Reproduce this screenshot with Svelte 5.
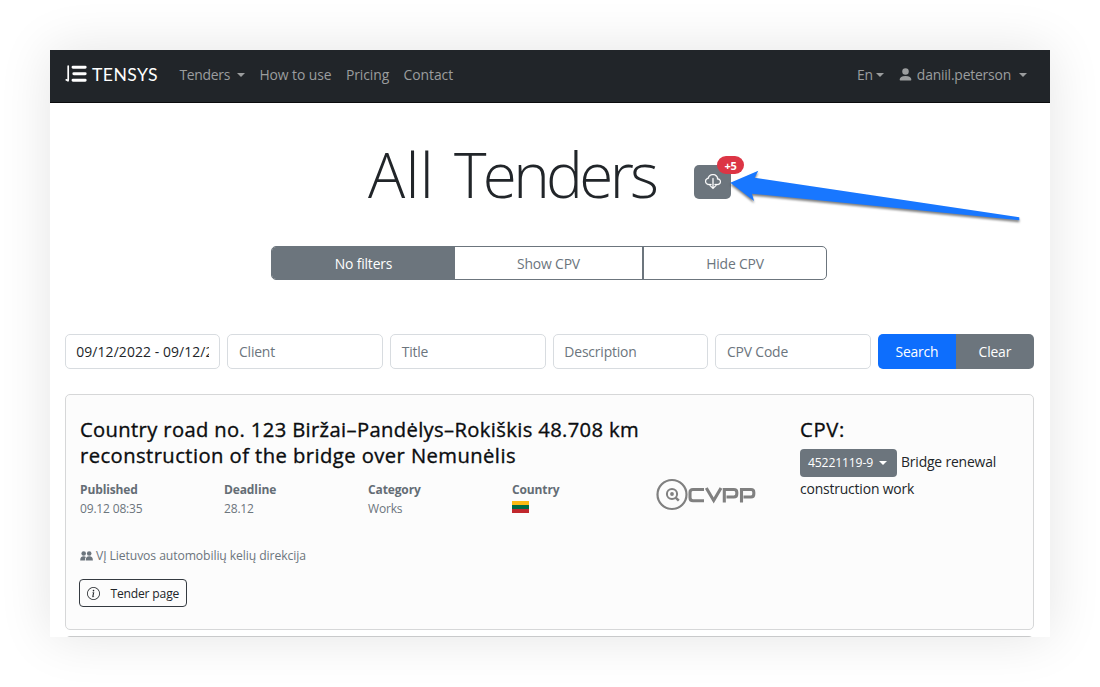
<script>
  const links = [
    { label: 'Tenders', caret: true },
    { label: 'How to use' },
    { label: 'Pricing' },
    { label: 'Contact' }
  ];
  const filters = ['No filters', 'Show CPV', 'Hide CPV'];
  const fields = ['Client', 'Title', 'Description', 'CPV Code'];
  const facts = [
    { name: 'Published', value: '09.12 08:35' },
    { name: 'Deadline', value: '28.12' },
    { name: 'Category', value: 'Works' },
    { name: 'Country', flag: true }
  ];
</script>

<div class="window">
  <nav>
    <div class="brand">
      <svg width="22" height="18" viewBox="0 0 22 18" fill="none" stroke="#fff" stroke-linecap="round">
        <path d="M3.200 1.200v14M1.200 14.800l1.800 1" stroke-width="1.700" />
        <path d="M8 2.300h12.200M8.800 8.700h11.400M8 15.200h12.200" stroke-width="2.900" />
      </svg>
      <span>TENSYS</span>
    </div>
    <div class="links">
      {#each links as l}
        <span class="link" class:drop={l.caret}>{l.label}{#if l.caret}<i class="caret"></i>{/if}</span>
      {/each}
    </div>
    <div class="account">
      <span class="lang">En<i class="caret"></i></span>
      <span class="user">
        <svg width="13" height="13" viewBox="0 0 16 16" fill="#9b9d9e"><path d="M1.600 15.500Q.8 15.500.8 14.500Q.8 9.800 8 9.800T15.200 14.500Q15.200 15.500 14.400 15.500z" /><circle cx="8" cy="4.400" r="4" /></svg>
        <b>daniil.peterson</b><i class="caret"></i>
      </span>
    </div>
  </nav>

  <header>
    <h1><span class="all">All</span> <span class="tenders">Tenders</span></h1>
    <div class="cloud">
      <svg width="16" height="16" viewBox="0 0 16 16" fill="#fff" stroke="#fff" stroke-width=".3">
        <path d="M4.406 1.342A5.530 5.530 0 0 1 8 0c2.690 0 4.923 2 5.166 4.579C14.758 4.804 16 6.137 16 7.773 16 9.569 14.502 11 12.687 11H10a.5.5 0 0 1 0-1h2.688C13.979 10 15 8.988 15 7.773c0-1.216-1.020-2.228-2.313-2.228h-.5v-.5C12.188 2.825 10.328 1 8 1a4.530 4.530 0 0 0-2.941 1.100c-.757.652-1.153 1.438-1.153 2.055v.448l-.445.049C2.064 4.805 1 5.952 1 7.318 1 8.785 2.230 10 3.781 10H6a.5.5 0 0 1 0 1H3.781C1.708 11 0 9.366 0 7.318c0-1.763 1.266-3.223 2.942-3.593.143-.863.698-1.723 1.464-2.383z" />
        <path d="M7.646 15.854a.5.5 0 0 0 .708 0l3-3a.5.5 0 0 0-.708-.708L8.500 14.293V5.500a.5.5 0 0 0-1 0v8.793l-2.146-2.147a.5.5 0 0 0-.708.708l3 3z" transform="translate(0 -1)" />
      </svg>
      <span class="badge">+5</span>
      <svg class="arrow" width="300" height="60" viewBox="0 0 300 60">
        <path d="M6.300 17.700L34.300 5.700 30.700 12.700 295.300 52.300V55.300L28 28.700 30 36z" fill="#1877ff" />
      </svg>
    </div>
  </header>

  <div class="filters">
    {#each filters as f, i}
      <div class="filter" class:active={i === 0}>{f}</div>
    {/each}
  </div>

  <div class="search">
    <div class="field date"><span>09/12/2022 - 09/12/2022</span></div>
    {#each fields as f}
      <div class="field">{f}</div>
    {/each}
    <div class="buttons"><div class="go">Search</div><div class="clear">Clear</div></div>
  </div>

  <article>
    <div class="main">
      <h4>Country road no. 123 Biržai–Pandėlys–Rokiškis 48.708 km<br /><span class="second">reconstruction of the bridge over Nemunėlis</span></h4>
      <div class="facts">
        {#each facts as f}
          <div class="fact">
            <strong>{f.name}</strong>
            {#if f.flag}<i class="flag"></i>{:else}<span>{f.value}</span>{/if}
          </div>
        {/each}
        <svg class="cvpp" width="101" height="34" viewBox="0 0 101 34" fill="none" stroke="#808080">
          <circle cx="16" cy="16.500" r="14.500" stroke-width="2.200" />
          <circle cx="16" cy="16" r="5.100" stroke-width="2" />
          <circle cx="16" cy="16" r="1.900" fill="#808080" stroke="none" />
          <path d="M19.600 19.600l3.200 3" stroke-width="2.600" />
          <path d="M48 11.500H37Q34 11.500 34 14.500V19.500Q34 22.800 37 22.800H48M50.300 10l7.400 12.500L65 10M68.300 24.500V11.500H77.800Q80.800 11.500 80.800 14.300V16Q80.800 19 77.800 19H70.500M85.500 24.500V11.500H95Q97.800 11.500 97.800 14.300V16Q97.800 19 95 19H87.500" stroke-width="3.100" />
        </svg>
      </div>
      <div class="client">
        <svg width="13" height="10" viewBox="0 0 13 10" fill="#6c757d"><circle cx="3.700" cy="2.500" r="2.300" /><circle cx="9.200" cy="2.500" r="2.300" /><path d="M.2 9.400Q.2 5.300 3.700 5.300 5.200 5.300 5.900 6 4.800 7.200 4.900 9.400zM5.700 9.400Q5.700 5.300 9.300 5.300T12.900 9.400z" /></svg>
        <span>VĮ Lietuvos automobilių kelių direkcija</span>
      </div>
      <div class="page-btn">
        <svg width="13" height="13" viewBox="0 0 16 16" fill="#212529"><path d="M8 15A7 7 0 1 1 8 1a7 7 0 0 1 0 14zm0 1A8 8 0 1 0 8 0a8 8 0 0 0 0 16z" /><path d="m8.930 6.588-2.290.287-.082.380.450.083c.294.070.352.176.288.469l-.738 3.468c-.194.897.105 1.319.808 1.319.545 0 1.178-.252 1.465-.598l.088-.416c-.2.176-.492.246-.686.246-.275 0-.375-.193-.304-.533L8.930 6.588zM9 4.500a1 1 0 1 1-2 0 1 1 0 0 1 2 0z" /></svg>
        <span>Tender page</span>
      </div>
    </div>
    <div class="cpv">
      <h4>CPV:</h4>
      <p><span class="code"><em>45221119-9</em><i class="caret"></i></span><span>Bridge renewal</span></p>
      <p class="rest">construction work</p>
    </div>
  </article>
  <div class="next"></div>
</div>

<style>
  :global(html) { overflow: hidden; }
  :global(body) { background: #fff; }
  .window, .window * { box-sizing: border-box; }
  .window {
    width: 1000px;
    height: 587px;
    margin: 50px;
    overflow: hidden;
    display: flex;
    flex-direction: column;
    background: #fff;
    box-shadow: 0 0 50px rgba(0, 0, 0, .11);
    color: #212529;
    font: 13.900px/22px 'Open Sans', sans-serif;
    letter-spacing: -.17px;
    white-space: nowrap;
  }
  i, em { font-style: normal; }
  b { font-weight: 400; }
  nav {
    flex: none;
    height: 53px;
    display: flex;
    align-items: center;
    padding: 0 23px 3px 15px;
    background: #212529;
    border-bottom: 1px solid #0b0c0d;
    color: #9b9d9e;
  }
  .brand { display: flex; align-items: center; gap: 5px; color: #fff; width: 114.400px; }
  .brand svg { margin-top: -2px; }
  .brand span { font: 17.600px/22px Lato, sans-serif; letter-spacing: .45px; }
  .links { display: flex; gap: 14.300px; flex: 1; letter-spacing: -.06px; }
  .caret {
    display: inline-block;
    border: 4.600px solid transparent;
    border-top-color: currentColor;
    border-bottom: 0;
    vertical-align: 3px;
  }
  .drop { letter-spacing: -.27px; }
  .drop .caret { margin-left: 7px; }
  .account { display: flex; gap: 15px; }
  .lang .caret { margin-left: 3px; }
  .user { display: flex; align-items: center; gap: 5px; letter-spacing: -.2px; }
  .user .caret { margin-left: 3px; }
  header { display: flex; padding: 41px 0 0 318px; height: 143px; flex: none; }
  h1 { margin: 0; width: 326px; display: flex; font: 300 62px/61px 'Open Sans', sans-serif; }
  .all { letter-spacing: .3px; width: 86px; }
  .tenders { letter-spacing: -3.700px; }
  .cloud {
    position: relative;
    width: 37px;
    height: 34px;
    margin-top: 21px;
    border-radius: 5px;
    background: #6c757d;
    display: flex;
    align-items: center;
    justify-content: center;
  }
  .badge {
    position: absolute;
    left: 23px;
    top: -9px;
    width: 27px;
    height: 18px;
    border-radius: 9px;
    background: #dc3545;
    color: #fff;
    font-size: 11px;
    line-height: 19px;
    font-weight: 700;
    text-align: center;
  }
  .arrow { position: absolute; left: 30px; top: 0; filter: drop-shadow(0 2px 1px rgba(0, 0, 0, .5)); }
  .filters {
    flex: none;
    display: grid;
    grid-template-columns: 183px 189px 182px;
    width: 556px;
    height: 34px;
    margin-left: 221px;
    border: 1px solid #6c757d;
    border-radius: 5px;
    overflow: hidden;
    color: #6c757d;
    line-height: 33px;
    text-align: center;
  }
  .filter:nth-child(2) { border-right: 2px solid #6c757d; }
  .filter.active { background: #6c757d; color: #fff; }
  .search { flex: none; display: grid; grid-template-columns: repeat(6, 155.800px); gap: 6.900px; margin: 54px 14.600px 0; }
  .field {
    height: 35px;
    padding: 0 10.700px;
    border: 1px solid #d8dce0;
    border-radius: 5px;
    color: #6c757d;
    line-height: 33px;
  }
  .date { color: #212529; letter-spacing: .1px; }
  .date span { display: block; overflow: hidden; }
  .buttons { display: grid; grid-template-columns: 1fr 1fr; border-radius: 5px; overflow: hidden; color: #fff; line-height: 35px; text-align: center; }
  .go { background: #0d6efd; }
  .clear { background: #6c757d; }
  article {
    flex: none;
    display: flex;
    height: 236px;
    margin: 25px 16px 0 15px;
    padding: 21px 14px 0;
    border: 1px solid #d6d7d8;
    border-radius: 5px;
    background: #fcfcfc;
  }
  .main { width: 720px; }
  h4 {
    margin: 0;
    font-size: 20.200px;
    line-height: 26px;
    font-weight: 500;
    color: #0b0d0f;
    letter-spacing: .36px;
    -webkit-text-stroke: .35px #0b0d0f;
  }
  .second { letter-spacing: .44px; }
  .facts { display: grid; grid-template-columns: repeat(5, 144px); margin-top: 12px; height: 44px; color: #6c757d; font-size: 12px; line-height: 19px; }
  .fact { display: flex; flex-direction: column; }
  strong { font-weight: 700; color: #646d75; letter-spacing: -.12px; }
  .flag { width: 17px; height: 12px; margin-top: 2px; background: linear-gradient(#fdb913 33%, #006a44 33% 66%, #c1272d 66%); }
  .cvpp { margin-top: -2px; }
  .client { display: flex; align-items: center; gap: 3px; margin-top: 22px; color: #6c757d; font-size: 12.200px; line-height: 20px; letter-spacing: -.1px; }
  .page-btn {
    display: flex;
    align-items: center;
    gap: 10px;
    width: 108px;
    height: 28px;
    margin: 13px 0 0 -.6px;
    padding-left: 7px;
    border: 1px solid #343a40;
    border-radius: 4px;
    font-size: 12.100px;
  }
  .page-btn span { padding-top: 2px; }
  .cpv p { margin: 0; }
  .cpv h4 { letter-spacing: .7px; }
  .code {
    display: inline-flex;
    align-items: center;
    gap: 6px;
    width: 97px;
    height: 28px;
    margin: 7px 4px 0 0;
    padding-left: 8px;
    border-radius: 4px;
    background: #6c757d;
    color: #fff;
    font-size: 12.200px;
  }
  .cpv .rest { margin-top: 1px; }
  .next { flex: none; margin: 6px 16px 0 15px; height: 20px; border: 1px solid #c9cacb; border-radius: 5px; }
</style>
